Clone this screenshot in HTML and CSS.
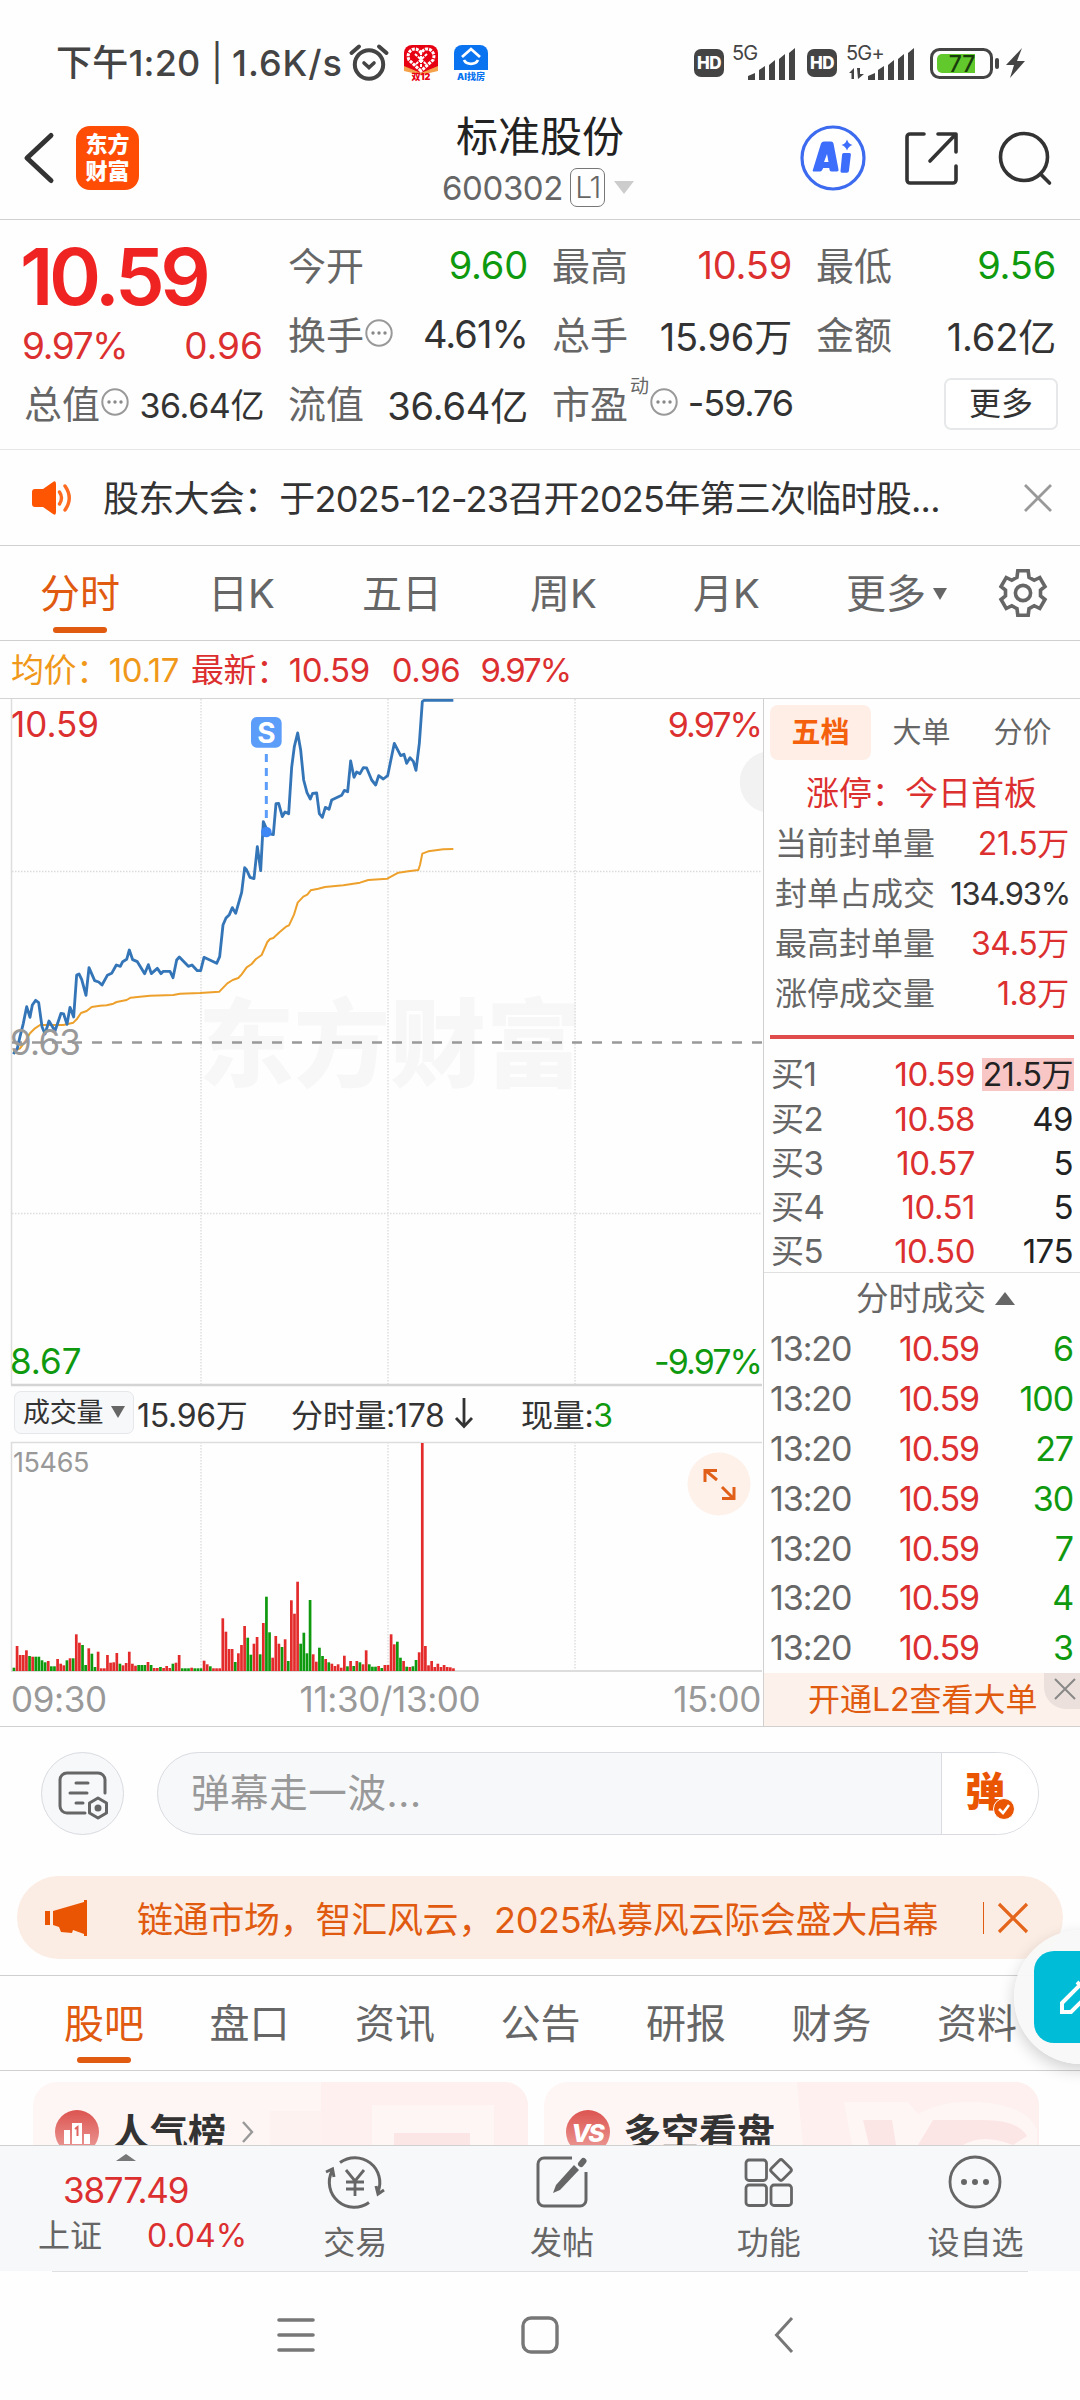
FILE: index.html
```html
<!DOCTYPE html>
<html lang="zh-CN">
<head>
<meta charset="utf-8">
<title>标准股份 600302</title>
<link rel="stylesheet" href="styles.css">
</head>
<body>
<div class="screen">

<div class="status">
  <span class="clock">下午1:20</span><span class="bar">|</span><span class="speed">1.6K/s</span>
  <svg class="alarm" width="40" height="38" viewBox="0 0 40 38" fill="none" stroke="#444" stroke-linecap="round"><circle cx="20" cy="20.500" r="14.200" stroke-width="4"/><path d="M15 19l5 4.500 5-4.500" stroke-width="3.600"/><path d="M2.500 9L10 2.500M37.500 9L30 2.500" stroke-width="4"/></svg>
  <svg class="app1" width="34" height="36" viewBox="0 0 34 36"><rect width="34" height="35" rx="8" fill="#fff"/><path d="M8 0h18a8 8 0 0 1 8 8v16L17 29 0 24V8a8 8 0 0 1 8-8z" fill="#e60012"/><path d="M0 21l17 7 17-7v5l-17 4-17-4z" fill="#f5a04a"/><path d="M17 26L5 15C2 9 7 3 12 4q3 1 5 4 2-3 5-4c5-1 10 5 7 11z" fill="none" stroke="#fff" stroke-width="3" stroke-dasharray="3 1"/><path d="M11 9l12 11M23 9L11 20M17 7v15" stroke="#fff" stroke-width="2" stroke-dasharray="3 1"/><text x="17" y="35" text-anchor="middle" class="app-label" fill="#e60012">双12</text></svg>
  <svg class="app2" width="34" height="36" viewBox="0 0 34 36"><rect width="34" height="35" rx="8" fill="#fff"/><path d="M8 0h18a8 8 0 0 1 8 8v17H0V8a8 8 0 0 1 8-8z" fill="#0a73f0"/><path d="M8 12l9-8 9 8M10 15a7.500 6 0 0 0 14 0" fill="none" stroke="#fff" stroke-width="2.800"/><text x="17" y="35" text-anchor="middle" class="app-label" fill="#0a73f0">AI找房</text></svg>
  <span class="hd hd1">HD</span>
  <svg class="sig1" width="66" height="38" viewBox="0 0 66 38" fill="#444"><text x="0" y="16" class="net">5G</text><path d="M16 36v-4l7-3v7zM27 36V26l6-4v14zM37 36V21l6-5v20zM47 36V15l6-5v26zM57 36V9l6-5v32z"/></svg>
  <span class="hd hd2">HD</span>
  <svg class="sig2" width="72" height="38" viewBox="0 0 72 38" fill="#444"><text x="0" y="16" class="net">5G+</text><path d="M3 29l5-5v11H5.500v-6zM11 24h3v6h4l-6 5zM22 36v-4l7-3v7zM32 36V26l6-4v14zM42 36V21l6-5v20zM52 36V15l6-5v26zM62 36V9l6-5v32z"/></svg>
  <svg class="batt" width="98" height="32" viewBox="0 0 98 32"><rect x="1.500" y="2.500" width="60" height="28" rx="8" fill="none" stroke="#444" stroke-width="3"/><path d="M12 7h33v19H12a5 5 0 0 1-5-5v-9a5 5 0 0 1 5-5z" fill="#62c92c"/><rect x="65" y="11" width="4" height="11" rx="2" fill="#444"/><text x="32" y="25" text-anchor="middle" class="batt-n">77</text><path d="M92 1L76 18h8l-4 13 15-17h-8z" fill="#444"/></svg>
</div>

<header class="nav">
  <svg class="back" width="34" height="56" viewBox="0 0 34 56" fill="none" stroke="#333" stroke-width="5" stroke-linecap="round" stroke-linejoin="round"><path d="M29 5.500L5 28l24 22.500"/></svg>
  <div class="logo">东方<br>财富</div>
  <div class="title"><h1>标准股份</h1><p><span>600302</span><b>L1</b><i></i></p></div>
  <svg class="ai" width="68" height="68" viewBox="0 0 68 68"><circle cx="34" cy="34" r="31" fill="#fff" stroke="#3d6bf0" stroke-width="3.200"/><path fill="#3d6dfb" fill-rule="evenodd" d="M22 19.500q.8-2 3-2h7q2 0 2.500 2l5 26q.5 2-1.500 2h-5.500q-2 0-2-2l-.3-1.500h-6l-1 2q-.8 1.500-2.500 1.500H15q-2 0-1-2zM28 30l-3 8h4.500zM44.500 29h6q1.600 0 1.400 1.600l-2 16.500q-.2 1.700-2 1.700h-5q-1.600 0-1.400-1.700l1.600-16.500q.2-1.600 1.400-1.600zM48 15.500q1.500 4.500 5.500 5.500-4 1-5.500 5.500-1.500-4.500-5.500-5.500 4-1 5.500-5.500z"/></svg>
  <svg class="share" width="56" height="56" viewBox="0 0 56 56" fill="none" stroke="#333" stroke-width="3.600" stroke-linecap="round" stroke-linejoin="round"><path d="M20 4H6a3 3 0 0 0-3 3v43a3 3 0 0 0 3 3h43a3 3 0 0 0 3-3V36M34 4h18v18M51 5L26 31"/></svg>
  <svg class="search" width="56" height="56" viewBox="0 0 56 56" fill="none" stroke="#333" stroke-width="3.600" stroke-linecap="round"><circle cx="26" cy="27" r="23.500"/><path d="M42.500 44l9 9"/></svg>
</header>

<section class="quote">
  <div class="q first">
    <div class="price">10.59</div>
    <div class="row chg red"><span>9.97%</span><span>0.96</span></div>
    <div class="row"><label>总值</label><svg class="dots"><use href="#dots"/></svg><span class="v small">36.64亿</span></div>
  </div>
  <div class="q">
    <div class="row"><label>今开</label><span class="v green">9.60</span></div>
    <div class="row"><label>换手</label><svg class="dots"><use href="#dots"/></svg><span class="v pct">4.61%</span></div>
    <div class="row"><label>流值</label><span class="v">36.64亿</span></div>
  </div>
  <div class="q">
    <div class="row"><label>最高</label><span class="v red">10.59</span></div>
    <div class="row"><label>总手</label><span class="v">15.96万</span></div>
    <div class="row"><label>市盈</label><sup>动</sup><svg class="dots"><use href="#dots"/></svg><span class="v pe">-59.76</span></div>
  </div>
  <div class="q">
    <div class="row"><label>最低</label><span class="v green">9.56</span></div>
    <div class="row"><label>金额</label><span class="v">1.62亿</span></div>
    <div class="row end"><button>更多</button></div>
  </div>
</section>

<div class="notice">
  <svg width="44" height="36" viewBox="0 0 44 36"><path d="M4 9h8L22 2q3-2 3 2v28q0 4-3 2l-10-7H4q-3 0-3-3V12q0-3 3-3z" fill="#fe5502"/><path d="M28.500 12q4 6 0 12M34 6q8.500 12 0 24" fill="none" stroke="#fe6a20" stroke-width="3.400" stroke-linecap="round"/></svg>
  <span>股东大会：于2025-12-23召开2025年第三次临时股...</span>
  <svg class="x" width="30" height="28" viewBox="0 0 30 28" stroke="#999" stroke-width="2.800"><path d="M2 1l26 26M28 1L2 27"/></svg>
</div>

<nav class="tabs k">
  <a class="on">分时</a><a>日K</a><a>五日</a><a>周K</a><a>月K</a><a>更多<i></i></a>
  <svg class="gear" width="50" height="50" viewBox="0 0 50 50" fill="none" stroke="#666" stroke-width="3.600"><path d="M19.800 2.800H30.200L31 9.300 36.200 12.300 41.800 9.500 47 18.500 42.500 22.200V27.800L47 31.500 41.800 40.500 36.200 37.700 31 40.700 30.200 47.200H19.800L19 40.700 13.800 37.700 8.200 40.500 3 31.500 7.500 27.800V22.200L3 18.500 8.200 9.500 13.800 12.300 19 9.300Z"/><circle cx="25" cy="25" r="7.600"/></svg>
</nav>

<div class="legend"><span class="avg">均价：10.17</span><span>最新：10.59</span><span>0.96</span><span class="pct">9.97%</span></div>

<main class="board">
  <div class="charts">
    <svg class="trend" width="763" height="687" viewBox="0 699 763 687">
      <text x="198" y="1079" class="mark">东方财富</text>
      <g stroke="#dcdcdc" stroke-width="1.400" stroke-dasharray="1.500 1.500" fill="none"><path d="M201 699V1385M388 699V1385M575 699V1385M12 871.500H762M12 1213.500H762"/></g>
      <path d="M11.500 699V1385" stroke="#ddd" stroke-width="1.500"/><path d="M11 1385H762" stroke="#d4d4d4" stroke-width="2.500"/>
      <path d="M12 1042.500H762" stroke="#999" stroke-width="2.600" stroke-dasharray="10 10"/>
      <path d="M763 752A31 31 0 0 0 763 812Z" fill="#f2f2f2"/>
      <g transform="translate(0 690) scale(.33333)" fill="none" stroke-linejoin="round">
        <path stroke="#eda12c" stroke-width="6" d="M40 1085L60 1075 75 1055 90 1030 105 1015 120 1005 190 1005 220 998 230 988 243 969 260 963 275 951 300 947 320 946 340 941 350 936 380 930 392 923 420 920 450 917 520 915 540 911 600 909 658 905 682 880 698 870 715 864 725 853 740 832 755 822 768 807 785 795 802 756 810 747 820 744 840 725 858 710 867 706 882 674 893 638 910 620 922 614 932 601 955 596 975 591 1030 586 1080 578 1105 570 1162 566 1195 548 1225 544 1255 540 1260 525 1267 491 1285 484 1330 478 1360 477"/>
        <path stroke="#3475b8" stroke-width="8.500" d="M40 1092L52 1075 60 1040 70 1000 80 950 90 982 97 945 107 931 116 938 126 1010 135 1032 147 993 165 1023 183 970 191 972 201 1003 210 952 221 981 230 855 237 852 245 868 258 916 267 833 284 872 296 876 306 885 322 856 335 850 349 825 361 829 368 815 380 808 388 780 398 809 412 815 434 851 445 824 454 851 472 835 483 851 490 844 510 844 519 863 530 810 538 801 565 829 576 825 592 842 602 842 612 802 650 820 659 800 669 705 678 684 688 674 697 653 707 670 725 607 734 533 740 540 750 562 762 566 772 470 782 542 790 395 799 415 806 431 820 434 828 341 836 340 847 380 855 366 866 371 875 232 883 170 893 129 902 180 911 270 921 308 931 327 938 310 950 309 958 371 967 382 976 352 987 358 995 330 1025 316 1033 301 1043 305 1052 213 1062 262 1070 246 1080 251 1090 233 1100 234 1115 270 1127 285 1136 257 1150 267 1163 257 1172 213 1183 160 1202 197 1212 193 1220 220 1230 203 1240 214 1248 241 1258 160 1267 35 1272 31 1360 31"/>
        <path d="M799 192V390" stroke="#5b9df9" stroke-width="9" stroke-dasharray="24 18"/><circle cx="799" cy="426" r="16" fill="#3d86f5"/>
        <rect x="753" y="81" width="92" height="92" rx="18" fill="#5b9df9"/>
      </g>
      <text x="266.500" y="743" text-anchor="middle" class="s-mark">S</text>
      <text x="11" y="737" class="ax r">10.59</text><text x="761" y="737" text-anchor="end" class="ax r pct">9.97%</text>
      <text x="10" y="1055" class="ax n">9.63</text>
      <text x="10" y="1374" class="ax g">8.67</text><text x="761" y="1374" text-anchor="end" class="ax g pct">-9.97%</text>
    </svg>
    <div class="vol-head"><button>成交量<i></i></button><span class="t1">15.96万</span><span class="t2">分时量:178<svg width="20" height="32" viewBox="0 0 20 32" fill="none" stroke="#333" stroke-width="2.800"><path d="M10 1v28M2 21l8 8.500 8-8.500"/></svg></span><span class="t3">现量:<em>3</em></span></div>
    <svg class="volume" width="763" height="231" viewBox="0 1441 763 231">
      <g stroke="#dcdcdc" stroke-width="1.400" stroke-dasharray="1.500 1.500"><path d="M201 1442V1671M388 1442V1671M575 1442V1671"/></g>
      <path d="M11.500 1671V1442.500H762" stroke="#ddd" stroke-width="1.500" fill="none"/><path d="M11 1671H762" stroke="#ddd" stroke-width="2"/>
      <g id="bars"></g>
      <text x="13" y="1472" class="vmax">15465</text>
      <circle cx="719" cy="1484" r="31.500" fill="#fef1ea"/>
      <path d="M717 1480L705 1470M705 1482V1470.500H717M722 1487L734 1499M734 1487V1498.500H722" fill="none" stroke="#e0601a" stroke-width="3"/>
    </svg>
    <div class="time"><span>09:30</span><span>11:30/13:00</span><span>15:00</span></div>
  </div>

  <aside class="side">
    <div class="stabs"><b>五档</b><span>大单</span><span>分价</span></div>
    <div class="limit">涨停：今日首板</div>
    <dl><dt>当前封单量</dt><dd>21.5万</dd><dt>封单占成交</dt><dd class="dark">134.93%</dd><dt>最高封单量</dt><dd>34.5万</dd><dt>涨停成交量</dt><dd>1.8万</dd></dl>
    <div class="redbar"></div>
    <div class="bids">
      <p><span>买1</span><span>10.59</span><span><mark>21.5万</mark></span></p>
      <p><span>买2</span><span>10.58</span><span>49</span></p>
      <p><span>买3</span><span>10.57</span><span>5</span></p>
      <p><span>买4</span><span>10.51</span><span>5</span></p>
      <p><span>买5</span><span>10.50</span><span>175</span></p>
    </div>
    <div class="dealhead">分时成交<i></i></div>
    <div class="deals">
      <p><span>13:20</span><span>10.59</span><span>6</span></p>
      <p><span>13:20</span><span>10.59</span><span>100</span></p>
      <p><span>13:20</span><span>10.59</span><span>27</span></p>
      <p><span>13:20</span><span>10.59</span><span>30</span></p>
      <p><span>13:20</span><span>10.59</span><span>7</span></p>
      <p><span>13:20</span><span>10.59</span><span>4</span></p>
      <p><span>13:20</span><span>10.59</span><span>3</span></p>
    </div>
    <div class="promo">开通L2查看大单<span class="close"><svg width="22" height="22" viewBox="0 0 22 22" stroke="#888" stroke-width="2"><path d="M1 1l20 20M21 1L1 21"/></svg></span></div>
  </aside>
</main>

<div class="comment">
  <div class="set"><svg width="52" height="50" viewBox="0 0 52 50" fill="none" stroke="#666" stroke-width="3" stroke-linecap="round"><path d="M47 22V9a7 7 0 0 0-7-7H9a7 7 0 0 0-7 7v26a7 7 0 0 0 7 7h18M18 12h12M12 22h17M18 32h7"/><path d="M40 27l8.500 5v10L40 47l-8.500-5V32z" stroke-linejoin="round"/><circle cx="40" cy="37" r="2" fill="#666"/></svg></div>
  <div class="field"><span>弹幕走一波...</span><div class="send"><b>弹</b><svg width="22" height="22" viewBox="0 0 22 22"><circle cx="11" cy="11" r="10.500" fill="#ea5504" stroke="#fff"/><path d="M6 11l4 4 6-8" fill="none" stroke="#fff" stroke-width="2.500"/></svg></div></div>
</div>

<div class="banner">
  <svg width="44" height="38" viewBox="0 0 44 38" fill="#ea5504"><path d="M1 12h5v14H1zM9 12L40 3V1h3v36h-3v-2L29 31l-1 3-11-1-2-5-6-2z"/></svg>
  <span>链通市场，智汇风云，2025私募风云际会盛大启幕</span><i></i>
  <svg class="x" width="30" height="30" viewBox="0 0 30 30" stroke="#e4651c" stroke-width="3.200"><path d="M1 1l28 28M29 1L1 29"/></svg>
</div>

<nav class="tabs info"><a class="on">股吧</a><a>盘口</a><a>资讯</a><a>公告</a><a>研报</a><a>财务</a><a>资料</a></nav>

<div class="cards">
  <div class="card c1">
    <svg class="deco" width="258" height="63" viewBox="0 0 258 63"><path d="M51 0H258V63H51z" fill="#fdf0ee"/><path d="M0 29H51V63H0z" fill="#fdf2f0"/><path d="M102 23H224V63H200V51H124V63H102z" fill="#fef6f4"/><path d="M124 51h76v12h-76z" fill="#fce6e5"/></svg>
    <svg width="44" height="44" viewBox="0 0 44 44"><circle cx="22" cy="22" r="22" fill="url(#rg)"/><path d="M9 20h6v14H9zM17 13h10v21H17zM29 24h6v10h-6z" fill="#fff"/><path d="M20 19l2.500-2v9" stroke="#df6460" stroke-width="2" fill="none"/></svg>
    <b>人气榜</b><svg width="14" height="22" viewBox="0 0 14 22" fill="none" stroke="#999" stroke-width="2.400"><path d="M2 1l9 10-9 10"/></svg>
  </div>
  <div class="card c2">
    <svg class="deco" width="242" height="63" viewBox="0 0 242 63"><path d="M0 0h242v63H6z" fill="#fdf0ee"/><path d="M47 20h64l10 12q25-14 60-12 50 3 59 28v15H55z" fill="#fef6f4"/><path d="M66 38h29l4 25H72zM136 38h50q35 0 44 16l-14 9q-30-12-50 0h-45z" fill="#fce6e5"/></svg>
    <svg width="44" height="44" viewBox="0 0 44 44"><circle cx="22" cy="22" r="22" fill="url(#rg)"/><text x="21" y="32" text-anchor="middle" class="vs">VS</text></svg>
    <b>多空看盘</b>
  </div>
</div>

<footer class="bottom">
  <div class="index"><i></i><strong>3877.49</strong><p><span>上证</span><em>0.04%</em></p></div>
  <div class="item"><svg width="62" height="54" viewBox="0 0 62 54" fill="none" stroke="#666" stroke-width="3"><path d="M16 7.500a25 25 0 0 1 38 29.500M45 47.500a25 25 0 0 1-37-31.500M2 17l6.500-3 1.500 8M60 35l-6 4-2-8"/><path d="M22 15l9 11 9-11M31 26v15M22 27h18M22 34h18" stroke-width="2.800"/></svg>交易</div>
  <div class="item"><svg width="52" height="54" viewBox="0 0 52 54" fill="none" stroke="#666" stroke-width="3"><path d="M36 3H8a6 6 0 0 0-6 6v36a6 6 0 0 0 6 6h36a6 6 0 0 0 6-6V17"/><path d="M38 10l5 5-19 20-7 3 3-8z" fill="#666" stroke="none"/><path d="M45 9l2.500-3" stroke-width="6" stroke-linecap="round"/></svg>发帖</div>
  <div class="item"><svg width="50" height="54" viewBox="0 0 50 54" fill="none" stroke="#666" stroke-width="2.800"><rect x="2" y="5" width="20.500" height="20.500" rx="3"/><rect x="2" y="30" width="20.500" height="20.500" rx="3"/><rect x="27" y="30" width="20.500" height="20.500" rx="3"/><rect x="29" y="7" width="16" height="16" rx="2.500" transform="rotate(45 37 15)"/></svg>功能</div>
  <div class="item"><svg width="54" height="54" viewBox="0 0 54 54"><circle cx="27" cy="27" r="25" fill="none" stroke="#666" stroke-width="2.800"/><g fill="#666"><circle cx="16" cy="27" r="3"/><circle cx="27" cy="27" r="3"/><circle cx="38" cy="27" r="3"/></g></svg>设自选</div>
</footer>

<div class="sysnav">
  <svg width="38" height="38" viewBox="0 0 38 38" stroke="#777" stroke-width="3.600" stroke-linecap="round"><path d="M2 4h34M2 19h34M2 34h34"/></svg>
  <svg width="38" height="38" viewBox="0 0 38 38" fill="none" stroke="#777" stroke-width="3.400"><rect x="2" y="2" width="34" height="34" rx="8"/></svg>
  <svg width="20" height="38" viewBox="0 0 20 38" fill="none" stroke="#777" stroke-width="3"><path d="M18 2L2.500 19 18 36"/></svg>
</div>

<div class="float"><div><svg width="44" height="60" viewBox="0 0 44 60" fill="none" stroke="#fff" stroke-width="4"><path d="M2 32L20 14l9 9L11 41H2zM17 11l12 12"/></svg></div></div>

<svg width="0" height="0" class="defs"><defs>
  <symbol id="dots" viewBox="0 0 28 28"><circle cx="14" cy="14" r="12.700" fill="none" stroke="#999" stroke-width="2"/><g fill="#888"><circle cx="8" cy="14" r="1.700"/><circle cx="14" cy="14" r="1.700"/><circle cx="20" cy="14" r="1.700"/></g></symbol>
  <linearGradient id="rg" x1="0" y1="0" x2="0" y2="1"><stop offset="0" stop-color="#dc5450"/><stop offset="1" stop-color="#eda09c"/></linearGradient>
</defs></svg>
</div>
<script src="volume.js"></script>
</body>
</html>
```
FILE: styles.css
```css
* { box-sizing: border-box; margin: 0; padding: 0; }
body { background: #fefefe; color: #333; font-family: Inter, "Noto Sans CJK SC", sans-serif; }
.screen { position: relative; width: 1080px; height: 2400px; overflow: hidden; white-space: nowrap; }
svg { display: block; flex: none; overflow: visible; }
i, em { font-style: normal; }
button { font: inherit; color: inherit; }
.red { color: #dc2f2f; }
.green { color: #0f990f; }

.status { display: flex; align-items: center; height: 110px; padding: 16px 0 0 56px; font-size: 36px; font-weight: 500; color: #444; line-height: 40px; }
.clock { width: 155px; letter-spacing: .2px; }
.bar { width: 21px; font-weight: 400; }
.speed { width: 117px; letter-spacing: 1px; }
.app1 { margin-left: 15px; }
.app2 { margin-left: 16px; }
.app-label { font-size: 9px; font-weight: 900; }
.hd { width: 30px; height: 28px; border-radius: 7px; background: #444; color: #fff; font-size: 17px; font-weight: 800; line-height: 28px; text-align: center; letter-spacing: -.5px; }
.hd1 { margin-left: 206px; }
.sig1 { margin-left: 8px; }
.hd2 { margin-left: 9px; }
.sig2 { margin-left: 9px; }
.net { font-size: 20px; font-weight: 400; letter-spacing: -.8px; }
.batt { margin-left: 12px; }
.batt-n { font-size: 23px; font-weight: 500; fill: #193c0c; }

.nav { display: flex; align-items: center; height: 110px; padding: 0 26px 13px 22px; border-bottom: 1px solid #d0d0d0; }
.logo { display: flex; align-items: center; justify-content: center; width: 63px; height: 64px; margin-left: 20px; border-radius: 14px; background: #ff4d05; color: #fff; font-size: 22px; font-weight: 900; line-height: 27px; }
.title { flex: 1; padding: 11px 0 0 142px; text-align: center; }
.title h1 { font-size: 42px; font-weight: 400; line-height: 48px; color: #222; }
.title p { display: flex; align-items: center; justify-content: center; height: 54px; margin: 0 -8px 0 -12px; font-size: 33px; color: #666; }
.title p span { letter-spacing: -.4px; }
.title b { width: 35px; height: 39px; margin-left: 7px; border: 1.500px solid #777; border-radius: 7px; font-size: 30px; font-weight: 300; line-height: 36px; letter-spacing: -1.500px; text-align: center; }
.title p i { margin-left: 9px; border: 10px solid transparent; border-top: 13px solid #ccc; border-bottom: 0; }
.share { margin-left: 37px; }
.search { margin-left: 38px; }

.quote { display: grid; grid-template-columns: repeat(4, 239px); gap: 25px; height: 230px; padding: 11px 0 0 24px; border-bottom: 1px solid #e6e6e6; }
.q .row { display: flex; align-items: center; height: 69px; font-size: 38px; }
.q .price { height: 92px; line-height: 90px; font-size: 79px; font-weight: 600; letter-spacing: -4.300px; color: #f02323; margin-left: -4px; }
.q .chg { justify-content: space-between; height: 46px; margin-left: -2px; font-size: 37px; letter-spacing: 0; line-height: 40px; }
.q .chg span:first-child { letter-spacing: -1.300px; }
.q label { margin-top: -5px; font-size: 38px; color: #666; }
.q .v { margin: -1px -1px 0 auto; letter-spacing: -.2px; }
.q .v.pct { letter-spacing: -.9px; }
.q .v.pe { margin-right: -2px; font-size: 36px; letter-spacing: -1.100px; }
.q .v.small { font-size: 34px; letter-spacing: -.4px; }
.dots { width: 28px; height: 28px; margin: -4px 0 0 1px; }
.q sup { align-self: flex-start; margin: 6px 0 0 2px; font-size: 19px; line-height: 24px; color: #666; }
.row.end { justify-content: flex-end; }
.quote button { width: 114px; height: 52px; margin-right: -3px; border: 2px solid #e6e8ea; border-radius: 7px; background: #fff; font-size: 32px; line-height: 44px; }

.notice { display: flex; align-items: center; height: 96px; padding: 0 27px 0 31px; border-bottom: 1px solid #d0d0d0; font-size: 36px; }
.notice span { margin: -3px 0 0 28px; letter-spacing: -.75px; }
.x { margin-left: auto; }

.tabs { height: 95px; border-bottom: 1px solid #d0d0d0; display: flex; align-items: center; font-size: 40px; color: #666; line-height: 93px; }
.tabs a { position: relative; }
.tabs .on { color: #e05a10; }
.tabs .on::after { content: ""; position: absolute; left: 40px; bottom: 7px; width: 54px; height: 6px; margin-left: -27px; border-radius: 3px; background: #e05a10; }
.tabs.k { display: grid; grid-template-columns: 168px 154px 168px 163px 153px 1fr 50px; padding: 0 32px 0 40px; }
.k i { display: inline-block; margin: 0 0 8px 7px; border: 7px solid transparent; border-top: 12px solid #666; border-bottom: 0; }
.tabs.info { padding-left: 64px; gap: 65.500px; }

.legend { display: flex; height: 58px; padding-left: 11px; border-bottom: 1px solid #d4d4d4; font-size: 33px; line-height: 59px; letter-spacing: -.4px; color: #dc2f2f; }
.legend .avg { width: 180px; color: #f0981a; }
.legend span + span + span { margin-left: 22px; }
.legend span.pct { margin-left: 20px; letter-spacing: -2px; }

.board { display: flex; height: 1028px; border-bottom: 1px solid #d0d0d0; }
.charts { width: 763px; }
.ax { font-size: 35px; letter-spacing: 0; }
.ax.pct { font-size: 34px; letter-spacing: -1.900px; }
.ax.n { letter-spacing: -.8px; }
.ax.r { fill: #dc2f2f; } .ax.g { fill: #0f990f; } .ax.n { fill: #999; }
.mark { font-size: 96px; font-weight: 900; fill: #f7f7f7; }
.s-mark { font-size: 28px; font-weight: 700; fill: #fff; }
.vol-head { display: flex; align-items: center; height: 55px; padding: 0 0 2px 14px; font-size: 32px; letter-spacing: -.3px; }
.vol-head button { width: 120px; height: 43px; padding: 0 0 0 8px; border: 1.500px solid #e6e7ea; border-radius: 7px; background: #f7f8fa; font-size: 27px; line-height: 42px; letter-spacing: -.3px; text-align: left; }
.vol-head button i { display: inline-block; margin: 0 0 4px 8px; border: 7px solid transparent; border-top: 12px solid #666; border-bottom: 0; }
.t1 { width: 154px; margin-left: 3px; }
.t2 { display: flex; align-items: center; width: 230px; }
.t2 svg { margin-left: 9px; }
.t3 em { color: #0f990f; }
.vmax { font-size: 27px; letter-spacing: -.4px; fill: #999; }
.time { display: flex; justify-content: space-between; padding: 0 2px 0 11px; font-size: 35px; line-height: 54px; letter-spacing: -.4px; color: #999; }

.side { display: flex; flex-direction: column; width: 317px; border-left: 1px solid #d0d0d0; }
.stabs { display: flex; margin: 6px 0 0 6px; line-height: 55px; font-size: 29px; color: #666; text-align: center; }
.stabs b { width: 101px; border-radius: 8px; background: #feeee6; color: #f4600c; }
.stabs span { width: 101px; }
.limit { height: 64px; padding-left: 42px; font-size: 33px; line-height: 66px; color: #dc2f2f; }
dl { display: grid; grid-template-columns: auto auto; justify-content: space-between; padding: 0 11px; font-size: 32px; line-height: 50px; margin-top: -5px; }
dt { color: #666; }
dd { text-align: right; color: #dc2f2f; letter-spacing: -.3px; }
dd.dark { color: #333; margin-right: -1px; letter-spacing: -1.200px; font-size: 31px; }
.redbar { height: 6px; margin: 16px 6px 13px; background: #e04b4b; }
.side p { display: grid; grid-template-columns: 80px 1fr 98px; padding: 0 7px 0 7px; text-align: right; }
.side p span:first-child { text-align: left; color: #666; }
.side p span:nth-child(2) { color: #dc2f2f; }
.bids p { font-size: 33px; line-height: 44.200px; letter-spacing: -.5px; color: #222; }
.side mark { margin-right: -1px; padding: 0 1px; background: #f9c6c6; color: #222; font-size: 32px; line-height: 33px; display: inline-block; }
.dealhead { height: 51px; margin-top: -1px; padding-left: 92px; border-top: 1px solid #e0e0e0; font-size: 32.500px; line-height: 51px; color: #666; }
.dealhead i { display: inline-block; margin: 0 0 5px 9px; border: 10px solid transparent; border-bottom: 13px solid #666; border-top: 0; }
.deals { font-size: 34px; line-height: 49.800px; letter-spacing: -1.100px; color: #0f990f; padding-top: 1px; }
.side .deals p { grid-template-columns: 80px 129px 1fr; padding-left: 6px; }
.promo { position: relative; flex: 1; padding-left: 44px; background: #fdf1eb; color: #e05a10; font-size: 32px; line-height: 53px; }
.close { position: absolute; right: 0; top: 0; width: 36px; height: 36px; padding: 5px 0 0 10px; border-radius: 0 0 0 22px; background: #ebe0dc; }

.comment { display: flex; gap: 33px; padding: 25px 41px 0; }
.set { display: flex; align-items: center; justify-content: center; width: 83px; height: 83px; border: 1.500px solid #d9dbe0; border-radius: 50%; background: #f7f8fa; padding: 4px 0 0 2px; }
.field { display: flex; width: 882px; height: 83px; border: 1.500px solid #d9dbe0; border-radius: 42px; background: #f7f8fa; overflow: hidden; font-size: 38.500px; line-height: 80px; color: #999; padding-left: 33px; }
.field > span { letter-spacing: .6px; }
.send { display: flex; width: 97px; margin-left: auto; padding-left: 23px; border-left: 1.500px solid #d9dbe0; background: #fff; color: #ea5504; }
.send b { font-size: 40px; font-weight: 900; line-height: 77px; }
.send svg { margin: 45px 0 0 -12px; }

.banner { display: flex; align-items: center; width: 1046px; height: 83px; margin: 41px 0 16px 17px; padding: 0 35px 0 27px; border-radius: 42px; background: #fcede4; color: #e05a10; font-size: 36px; }
.banner span { margin: -2px 0 0 49px; letter-spacing: -.3px; }
.banner i { width: 1.500px; height: 32px; margin-left: auto; background: #e05a10; }
.banner .x { margin-left: 14px; }
.info { border-top: 1px solid #d0d0d0; height: 96px; }

.cards { display: flex; gap: 16px; height: 74px; padding: 11px 0 0 33px; overflow: hidden; }
.card { position: relative; display: flex; align-items: center; width: 495px; height: 120px; padding: 0 0 20px 22px; border-radius: 24px; background: #fef6f4; overflow: hidden; }
.card > * { position: relative; }
.card .deco { position: absolute; right: 0; top: 0; }
.card b { margin: 0 15px 0 13px; font-size: 38px; line-height: 60px; }
.vs { font-size: 25px; font-weight: 800; font-style: italic; fill: #fff; letter-spacing: -2px; }

.bottom { display: flex; height: 126px; border-top: 1px solid #d0d0d0; background: #f7f8fa; color: #666; font-size: 32px; }
.index { display: flex; flex-direction: column; width: 252px; color: #dc2f2f; }
.index > i { width: 20px; margin: 8px 0 0 116px; border: 10px solid transparent; border-bottom: 7px solid #777; border-top: 0; }
.index strong { padding-left: 63px; font-size: 35px; font-weight: 400; line-height: 58px; letter-spacing: -1.200px; }
.index p { display: flex; padding: 1px 0 0 38px; line-height: 32px; }
.index em { margin-left: 45px; letter-spacing: 0; }
.index p span { color: #666; }
.item { display: flex; flex-direction: column; align-items: center; width: 206.700px; line-height: 48px; padding-top: 9px; }
.item svg { margin-bottom: 10px; }

.sysnav { display: flex; align-items: flex-start; height: 129px; margin: 0 52px; padding: 44px 0 0 225px; border-top: 1px solid #e0e0e0; }
.sysnav svg + svg { margin-left: 206px; }
.sysnav svg + svg + svg { margin-left: 215px; }

.float { position: absolute; left: 1014px; top: 1930px; width: 134px; height: 134px; border-radius: 50%; background: rgba(248,248,248,.96); box-shadow: 0 6px 16px rgba(0,0,0,.18); }
.float div { width: 110px; height: 92px; margin: 21px 0 0 20px; padding: 20px 0 0 26px; border-radius: 20px; background: #00bcd6; }
.defs { position: absolute; }
```
FILE: volume.js
```js
// One entry per minute: height above the base line, then g for a falling minute or r for a rising one.
var minutes = ("10g 75r 48r 48r 62r 45g 43r 43g 43g 32g 26g 30r 14g 14g 36r 22r 17r 32g 38r 38g 110r 85r 78g 18g 68r 52g 12g 58r 8r 8r " +
  "48r 25r 26r 54r 22g 17r 24r 58r 22r 16r 18g 18g 18g 27r 18g 9r 9r 12g 9r 15r 9r 22g 25r 48r 8g 8g 8g 10r 8g 8g 8g 31r 20r 14g 8r 8r 8r " +
  "158r 118r 66r 66r 27g 53r 78r 135r 100g 49g 82r 102r 50g 144r 223g 116g 40r 105r 82r 72g 95r 30g 212r 172r 268r 82g 115g 53g 213g 50r " +
  "28r 70g 45g 36r 26g 22r 15r 20r 10r 46r 14g 30r 15g 30r 26g 20r 62r 20g 13g 13g 15r 9g 18r 18r 110r 80r 88g 40g 30r 13g 12r 14g 33g " +
  "56r 684r 75r 17r 30r 12r 22r 12r 18r 12r 11r 8r").split(" ");
var marks = "";
minutes.forEach(function (m, i) {
  var h = parseInt(m, 10) / 3;
  marks += '<rect x="' + (12.6 + i * 3.117).toFixed(2) + '" y="' + (1671 - h).toFixed(1) + '" width="2.7" height="' + h.toFixed(1) +
    '" fill="' + (m.slice(-1) === "g" ? "#0f990f" : "#e32b2b") + '"/>';
});
document.getElementById("bars").innerHTML = marks;
```
